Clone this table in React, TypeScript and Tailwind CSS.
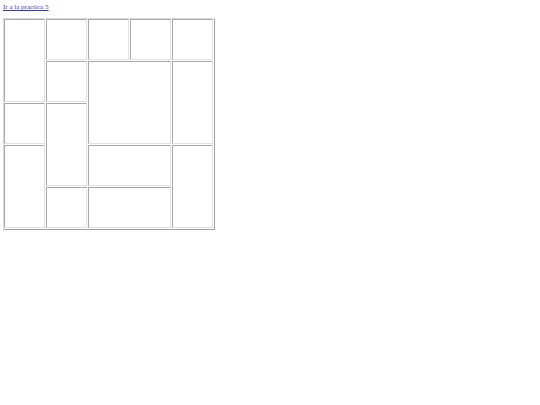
const cells: { c: string; r: string }[] = [
  { c: "col-start-1 col-span-1", r: "row-start-1 row-span-2" },
  { c: "col-start-2 col-span-1", r: "row-start-1 row-span-1" },
  { c: "col-start-3 col-span-1", r: "row-start-1 row-span-1" },
  { c: "col-start-4 col-span-1", r: "row-start-1 row-span-1" },
  { c: "col-start-5 col-span-1", r: "row-start-1 row-span-1" },
  { c: "col-start-2 col-span-1", r: "row-start-2 row-span-1" },
  { c: "col-start-3 col-span-2", r: "row-start-2 row-span-2" },
  { c: "col-start-5 col-span-1", r: "row-start-2 row-span-2" },
  { c: "col-start-1 col-span-1", r: "row-start-3 row-span-1" },
  { c: "col-start-2 col-span-1", r: "row-start-3 row-span-2" },
  { c: "col-start-1 col-span-1", r: "row-start-4 row-span-2" },
  { c: "col-start-3 col-span-2", r: "row-start-4 row-span-1" },
  { c: "col-start-5 col-span-1", r: "row-start-4 row-span-2" },
  { c: "col-start-2 col-span-1", r: "row-start-5 row-span-1" },
  { c: "col-start-3 col-span-2", r: "row-start-5 row-span-1" },
];

export default function App() {
  return (
    <div className="min-h-[405px] w-[540px] bg-white px-[3px] pt-[3px] font-['Liberation_Serif',serif]">
      <p className="text-[7px] leading-[9px]">
        <a href="#" className="text-[#3333dd] underline">
          Ir a la practica 5
        </a>
      </p>
      <div className="mt-[6px] grid w-[212px] grid-cols-[repeat(5,41px)] grid-rows-[repeat(5,41px)] gap-px border border-t-[#dadada] border-l-[#dadada] border-b-[#a0a0a0] border-r-[#a0a0a0] pr-px pb-px">
        {cells.map((cell, i) => (
          <div
            key={i}
            className={`${cell.c} ${cell.r} border border-t-[#a8a8a8] border-l-[#a8a8a8] border-b-[#e2e2e2] border-r-[#e2e2e2]`}
          />
        ))}
      </div>
    </div>
  );
}
